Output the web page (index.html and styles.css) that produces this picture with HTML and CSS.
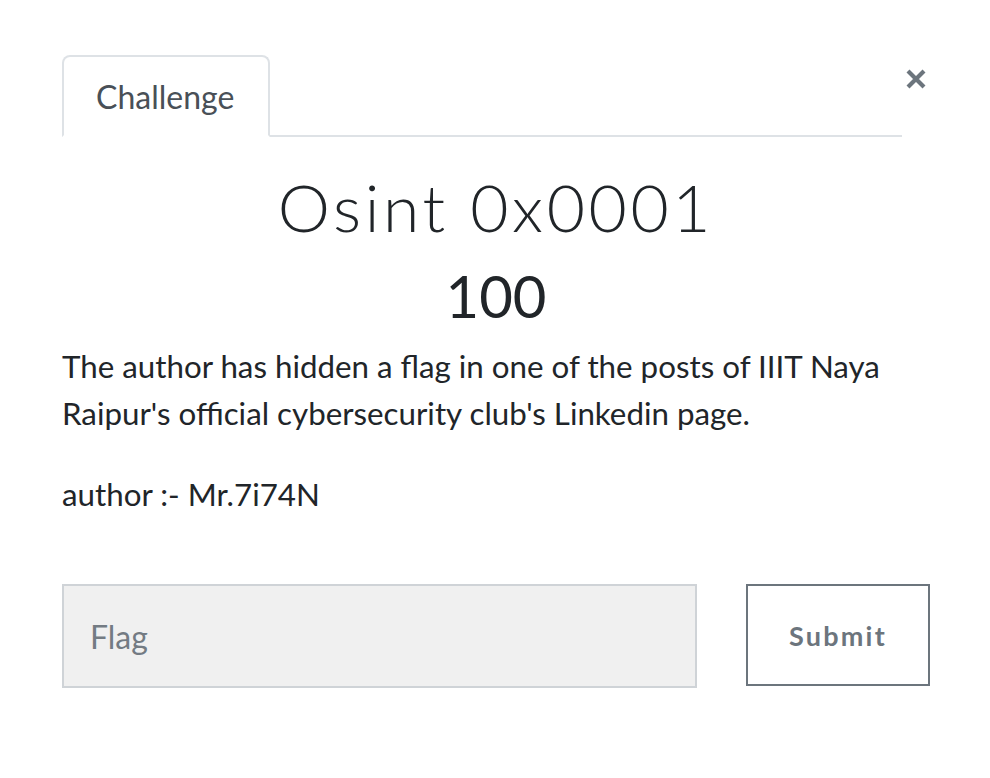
FILE: index.html
```html
<!DOCTYPE html>
<html>
<head>
<meta charset="utf-8">
<link rel="stylesheet" href="styles.css">
</head>
<body>
<div class="modal">
  <div class="header">
    <nav class="tabs">
      <div class="tab">Challenge</div>
    </nav>
    <button class="close" aria-label="Close">
      <svg width="22" height="22" viewBox="0 0 22 22"><path d="M3 3 L19 19 M19 3 L3 19" stroke="#6c757d" stroke-width="4.2" stroke-linecap="butt"/></svg>
    </button>
  </div>
  <h2 class="name">Osint 0x0001</h2>
  <h3 class="value">100</h3>
  <p class="desc">The author has hidden a flag in one of the posts of IIIT Naya Raipur's official cybersecurity club's Linkedin page.</p>
  <p class="author">author :- Mr.7i74N</p>
  <form class="submit-row">
    <input class="flag" type="text" placeholder="Flag">
    <button class="submit" type="button">Submit</button>
  </form>
</div>
</body>
</html>
```

FILE: styles.css
```css
* { box-sizing: border-box; }
html, body { margin: 0; background: #fff; }
body {
  font-family: Lato, "Liberation Sans", sans-serif;
  color: #212529;
}
.modal {
  width: 990px;
  padding: 55px 60px 0 62px;
}
.header {
  display: flex;
  align-items: flex-start;
}
.tabs {
  flex: 0 0 840px;
  display: flex;
  border-bottom: 2px solid #dee2e6;
}
.tab {
  width: 208px;
  height: 82px;
  margin-bottom: -2px;
  border: 2px solid #dee2e6;
  border-bottom-color: #fff;
  border-radius: 8px 8px 0 0;
  color: #495057;
  font-size: 32px;
  line-height: 80px;
  padding-left: 32px;
}
.close {
  margin-left: auto;
  margin-top: 13px;
  margin-right: 3px;
  background: none;
  border: 0;
  padding: 0;
  width: 22px;
  height: 22px;
  display: flex;
}
.name {
  margin: 30px 0 0;
  text-align: center;
  font-weight: 300;
  font-size: 66px;
  letter-spacing: 3.6px;
  line-height: 80px;
}
.value {
  margin: 14px 0 0;
  text-align: center;
  font-weight: 400;
  font-size: 58px;
  line-height: 70px;
}
.desc {
  margin: 12px 0 0;
  font-size: 31.3px;
  line-height: 47px;
}
.author {
  margin: 34px 0 0;
  font-size: 31.3px;
  line-height: 47px;
}
.submit-row {
  display: flex;
  margin-top: 66px;
}
.flag {
  width: 635px;
  height: 104px;
  background: #f0f0f0;
  border: 2px solid #cfd3d7;
  font-family: Lato, sans-serif;
  font-size: 32px;
  padding: 0 26px;
  color: #495057;
}
.flag::placeholder { color: #737b83; opacity: 1; }
.submit {
  margin-left: auto;
  width: 184px;
  height: 102px;
  background: #fff;
  border: 2px solid #6c757d;
  color: #6c757d;
  font-family: Lato, sans-serif;
  font-weight: 700;
  font-size: 27px;
  letter-spacing: 2.2px;
}
```
